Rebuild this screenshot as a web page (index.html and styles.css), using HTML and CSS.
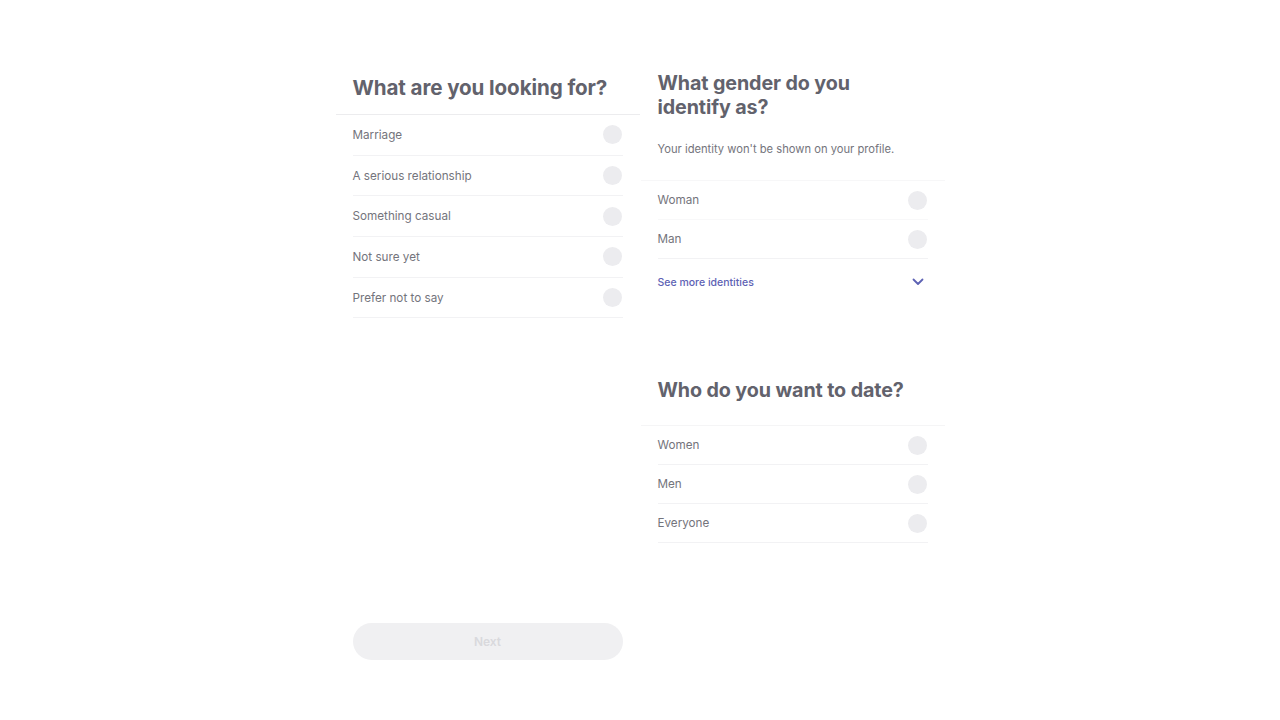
FILE: index.html
```html
<!DOCTYPE html>
<html lang="en">
<head>
  <meta charset="UTF-8">
  <meta name="viewport" content="width=device-width, initial-scale=1.0">
  <title>Onboarding</title>
  <link rel="stylesheet" href="styles.css">
</head>
<body>
  <main class="page">
    <section class="column column-left">
      <div class="head">
        <h1 class="title title-main">What are you looking for?</h1>
      </div>
      <ul class="options options-tall">
        <li class="option"><span>Marriage</span><span class="radio"></span></li>
        <li class="option"><span>A serious relationship</span><span class="radio"></span></li>
        <li class="option"><span>Something casual</span><span class="radio"></span></li>
        <li class="option"><span>Not sure yet</span><span class="radio"></span></li>
        <li class="option"><span>Prefer not to say</span><span class="radio"></span></li>
      </ul>
      <button class="next" type="button" disabled>Next</button>
    </section>

    <section class="column column-right">
      <div class="head head-gender">
        <h1 class="title title-wrap">What gender do you<br>identify as?</h1>
        <p class="subtitle">Your identity won't be shown on your profile.</p>
      </div>
      <ul class="options">
        <li class="option option-soft"><span>Woman</span><span class="radio"></span></li>
        <li class="option"><span>Man</span><span class="radio"></span></li>
      </ul>
      <button class="more" type="button">
        <span>See more identities</span>
        <svg width="12" height="8" viewBox="0 0 12 8" fill="none"><path d="M1.5 1.5L6 6l4.5-4.5" stroke="currentColor" stroke-width="1.8" stroke-linecap="round" stroke-linejoin="round"/></svg>
      </button>

      <div class="head head-date">
        <h1 class="title">Who do you want to date?</h1>
      </div>
      <ul class="options">
        <li class="option"><span>Women</span><span class="radio"></span></li>
        <li class="option"><span>Men</span><span class="radio"></span></li>
        <li class="option"><span>Everyone</span><span class="radio"></span></li>
      </ul>
    </section>
  </main>
</body>
</html>
```

FILE: styles.css
```css
body { margin: 0; background: #fff; font-family: Inter, "Noto Sans", sans-serif; color: #74747c; }
.page { display: flex; justify-content: center; padding-top: 64px; }
.column { width: 304px; display: flex; flex-direction: column; }
.column-left { height: 596px; }
.column-right { margin-left: 1px; }

.head { padding: 11px 17px 13px; border-bottom: 1px solid #ececee; }
.title { margin: 0; font-size: 19.7px; line-height: 26px; font-weight: 700; color: #62626c; letter-spacing: -0.1px; }
.title-main { font-size: 20.6px; }
.title-wrap { line-height: 24px; }
.head-gender { padding: 7px 17px 23px; border-bottom-color: #f7f7f8; }
.subtitle { margin: 22px 0 0; font-size: 11.2px; line-height: 16px; color: #74747c; }
.head-date { margin-top: 72px; padding: 0 17px 22px; border-bottom-color: #f5f5f6; }

.options { list-style: none; margin: 0; padding: 0 17px; }
.option { display: flex; align-items: center; justify-content: space-between; height: 38px; border-bottom: 1px solid #f2f2f4; font-size: 11.7px; }
.options-tall .option { height: 39.7px; }
.option-soft { border-bottom-color: #f8f8f9; }
.radio { width: 19px; height: 19px; border-radius: 50%; background: #ececef; margin-right: 1px; }

.more { display: flex; align-items: center; justify-content: space-between; height: 46px; margin: 0 17px; padding: 0 4px 0 0; border: 0; background: none; font: inherit; font-size: 10.5px; font-weight: 500; color: #5d62b4; cursor: pointer; }

.next { margin: auto 17px 0; height: 37px; border: 0; border-radius: 19px; background: #f0f0f2; font: inherit; font-size: 12px; font-weight: 600; color: #d9d9dd; }
```
